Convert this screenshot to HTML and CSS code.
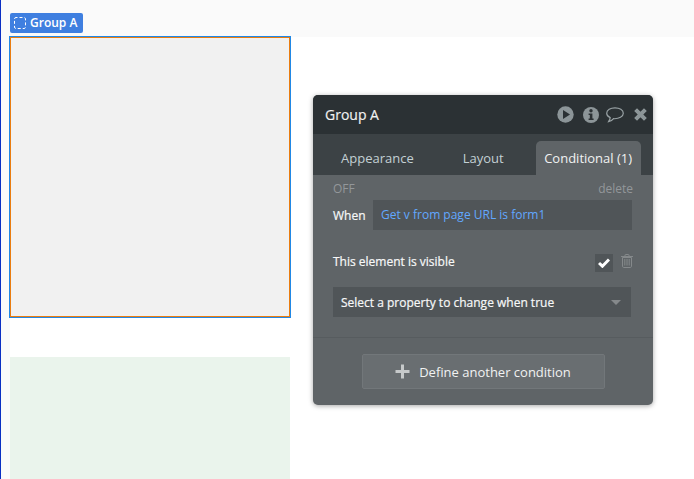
FILE: index.html
```html
<!DOCTYPE html>
<html lang="en">
<head>
<meta charset="utf-8">
<title>Group A</title>
<link rel="stylesheet" href="styles.css">
</head>
<body>
<div class="page">
  <div class="topband">
    <div class="tag">
      <svg class="tag-icon" width="12" height="12" viewBox="0 0 12 12"><rect x="0.5" y="0.5" width="11" height="11" rx="1.5" fill="none" stroke="#fff" stroke-width="1" stroke-dasharray="3 2" stroke-dashoffset="1.5"/></svg>
      <span>Group A</span>
    </div>
  </div>
  <div class="canvas">
    <div class="group-selected"></div>
    <div class="group-green"></div>
  </div>
</div>
<section class="panel">
  <header class="panel-head">
    <span class="panel-title">Group A</span>
    <div class="panel-icons">
      <svg class="icon-play" width="17" height="17" viewBox="0 0 17 17"><circle cx="8.5" cy="8.5" r="8.2" fill="#8c9598"/><path d="M6 4 13 8.5 6 13Z" fill="#2b3134"/></svg>
      <svg class="icon-info" width="16" height="16" viewBox="0 0 16 16"><circle cx="8" cy="8" r="8" fill="#8c9598"/><circle cx="8" cy="3.8" r="1.7" fill="#2b3134"/><path d="M5.6 6.6H9.4V11.6H10.6V13H5.6V11.6H6.8V8H5.6Z" fill="#2b3134"/></svg>
      <svg class="icon-bubble" width="18" height="16" viewBox="0 0 18 16"><path d="M9 .8C4.5.8.7 3 .7 6.2.7 8.3 2.3 9.8 4.2 10.6 4.1 12 3.4 13.4 2.6 14.6 4.6 14.3 6.5 13.2 7.6 11.7 13 12 17.3 9.6 17.3 6.2 17.3 3 13.5.8 9 .8Z" fill="none" stroke="#98a1a4" stroke-width="1.2"/></svg>
      <svg class="icon-close" width="13" height="13" viewBox="0 0 13 13"><path d="M1.6 1.6 11.4 11.4M11.4 1.6 1.6 11.4" stroke="#8c9598" stroke-width="4"/></svg>
    </div>
  </header>
  <nav class="tabs">
    <span class="tab tab-appearance">Appearance</span>
    <span class="tab tab-layout">Layout</span>
    <span class="tab tab-active">Conditional (1)</span>
  </nav>
  <div class="panel-body">
    <div class="cond-head"><span>OFF</span><span>delete</span></div>
    <div class="when-row">
      <span class="when-label">When</span>
      <div class="when-expr">Get v from page URL is form1</div>
    </div>
    <div class="visible-row">
      <span class="visible-label">This element is visible</span>
      <div class="visible-actions">
        <span class="check">
          <svg width="12" height="10" viewBox="0 0 12 10"><path d="M1 5 4.4 8.2 11 1.5" fill="none" stroke="#fff" stroke-width="3"/></svg>
        </span>
        <svg class="icon-trash" width="12" height="14" viewBox="0 0 12 14"><path d="M1.5 3.5H10.5V12.2C10.5 12.9 10 13.5 9.3 13.5H2.7C2 13.5 1.5 12.9 1.5 12.2ZM0 2.5H12M4 2.5V1C4 .7 4.3.5 4.6.5H7.4C7.7.5 8 .7 8 1V2.5M3.8 5V11.5M6 5V11.5M8.2 5V11.5" fill="none" stroke="#85898b" stroke-width="1"/></svg>
      </div>
    </div>
    <div class="select-box">
      <span>Select a property to change when true</span>
      <span class="caret"></span>
    </div>
    <div class="panel-foot">
      <div class="add-btn">
        <svg width="15" height="15" viewBox="0 0 15 15"><path d="M7.5 0.5V14.5M0.5 7.5H14.5" stroke="#c6c9ca" stroke-width="3"/></svg>
        <span>Define another condition</span>
      </div>
    </div>
  </div>
</section>
</body>
</html>
```

FILE: styles.css
```css
* { box-sizing: border-box; }
html, body { margin: 0; height: 100%; overflow: hidden; }
body {
  background: #fff;
  font-family: "Open Sans", sans-serif;
  border-left: 1px solid #0a2fc4;
}
.page { height: 479px; background: #fafafa; display: flex; flex-direction: column; }
.topband { height: 37px; padding: 13px 0 0 9px; }
.tag {
  width: 73px; height: 20px; background: #3f7fe0; border-radius: 2px;
  display: flex; align-items: center; padding-left: 4px; gap: 4px;
  color: #fff; font-size: 12px; font-weight: 600; line-height: 20px;
}
.tag-icon { flex: none; }
.canvas { flex: 1; margin-left: 9px; background: #fff; display: flex; flex-direction: column; align-items: flex-start; }
.group-selected {
  width: 280px; height: 280px; flex: none; background: #f1f1f1;
  border: 1px solid #ea7d10; outline: 1px solid #2188e6;
}
.group-green { width: 280px; height: 122px; flex: none; margin-top: 40px; background: #eaf4ec; }

.panel {
  position: absolute; left: 313px; top: 95px; width: 340px; height: 310px;
  border-radius: 5px; overflow: hidden; background: #5f6467;
  box-shadow: 0 1px 5px rgba(0,0,0,.35);
  display: flex; flex-direction: column;
}
.panel-head {
  height: 39px; flex: none; background: #2b3134; display: flex; align-items: center;
  justify-content: space-between; padding: 0 6px 0 12px;
}
.panel-title { color: #f1f2f2; font-size: 14px; -webkit-text-stroke: .15px #f1f2f2; }
.panel-icons { display: flex; align-items: center; }
.icon-info { margin-left: 9px; }
.icon-bubble { margin-left: 7px; }
.icon-close { margin-left: 10px; }
.tabs { height: 41px; flex: none; background: #3c4245; display: flex; align-items: flex-end; font-size: 13px; color: #c3d0d4; }
.tab { height: 34px; line-height: 34px; white-space: nowrap; }
.tab-appearance { margin-left: 28px; }
.tab-layout { margin-left: 49px; }
.tab-active {
  margin-left: 32px; width: 105px; text-align: center; background: #5f6467;
  border-radius: 5px 5px 0 0; color: #f1f2f2;
}
.panel-body { flex: 1; display: flex; flex-direction: column; padding: 0 20px; }
.cond-head { display: flex; justify-content: space-between; height: 25px; padding-top: 5px; font-size: 12px; line-height: 17px; color: #93979a; }
.when-row { display: flex; align-items: center; height: 30px; }
.when-label { width: 40px; color: #f7f8f8; font-size: 12px; -webkit-text-stroke: .2px #f7f8f8; }
.when-expr { width: 259px; height: 30px; line-height: 30px; padding-left: 8px; background: #505558; color: #62a8ff; font-size: 12px; }
.visible-row { display: flex; align-items: flex-start; justify-content: space-between; margin-top: 24px; height: 18px; }
.visible-label { color: #f7f8f8; font-size: 12px; line-height: 16px; -webkit-text-stroke: .2px #f7f8f8; }
.visible-actions { display: flex; align-items: flex-start; gap: 8px; }
.check { width: 18px; height: 18px; background: #505558; display: flex; align-items: center; justify-content: center; }
.select-box {
  margin-top: 15px; width: 298px; height: 30px; background: #505558; color: #f7f8f8;
  font-size: 12px; -webkit-text-stroke: .2px #f7f8f8; display: flex; align-items: center; justify-content: space-between; padding: 0 10px 0 8px;
}
.caret { width: 0; height: 0; border-left: 5px solid transparent; border-right: 5px solid transparent; border-top: 5px solid #85898b; }
.panel-foot {
  margin: 20px -20px 0; flex: 1; border-top: 1px solid #575c5f;
  display: flex; justify-content: center; padding-top: 16px;
}
.add-btn {
  width: 243px; height: 35px; background: #696e71; border: 1px solid #72777a; border-radius: 2px;
  display: flex; align-items: center; justify-content: center; gap: 9px;
  color: #f1f2f2; font-size: 13px;
}
```
